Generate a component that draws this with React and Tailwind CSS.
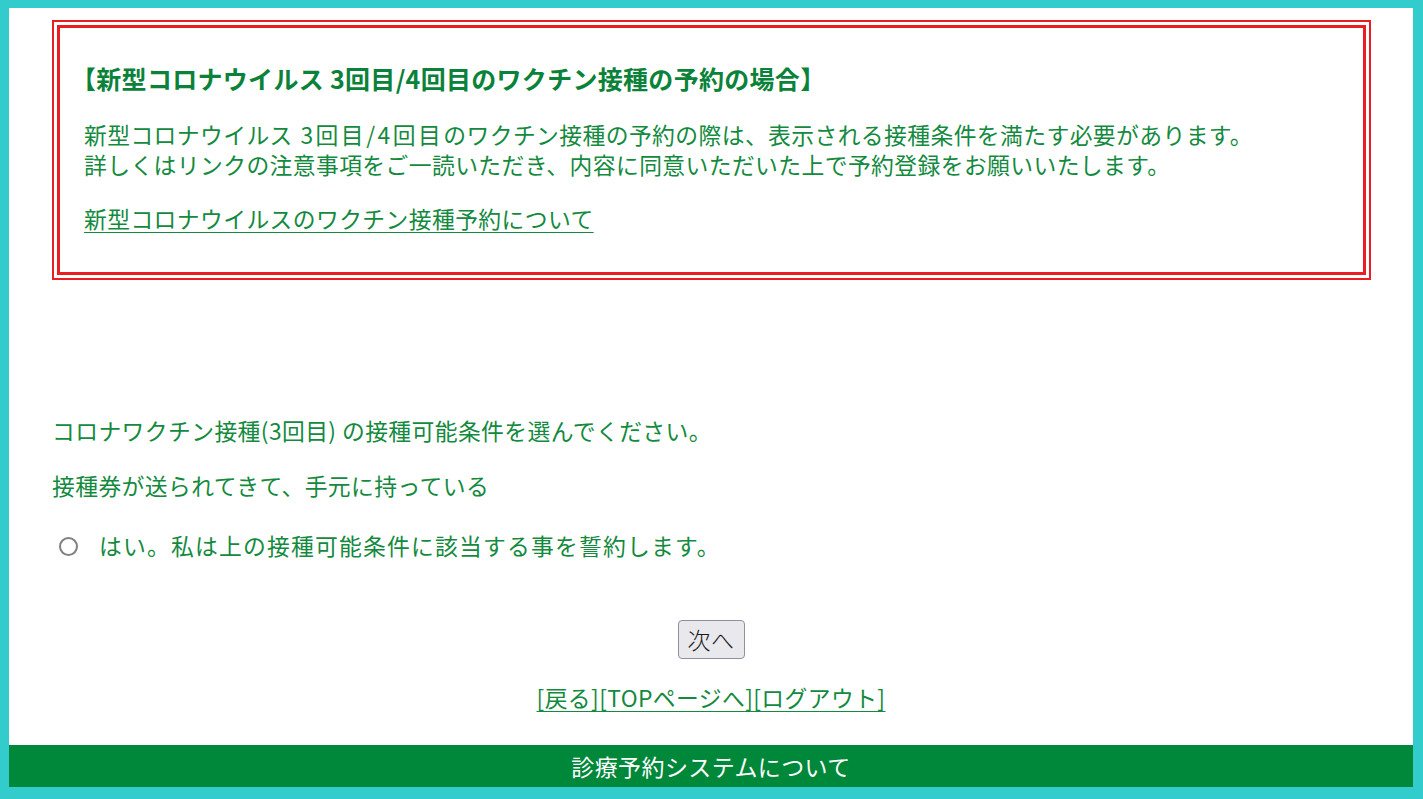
export default function App() {
  const font = { fontFamily: '"Noto Sans CJK JP", "Noto Sans", sans-serif' };
  return (
    <div className="min-h-screen bg-[#33cccc] pt-[8px] pl-[9px] pr-[10px] pb-[12px]" style={font}>
      <div className="bg-white flex flex-col text-[#138a3e] tracking-[0.4px]">
        <div className="mt-[12px] mx-[43px] mr-[42px] border-2 border-[#ea1d22] p-[3px]">
          <div className="border-[3px] border-[#ea1d22] pl-[24px] pr-6 pt-[34px] pb-[38px]">
            <h2 className="text-[25px] leading-[32px] font-bold text-[#0b8239] -ml-[13px] tracking-[0.3px]">
              【新型コロナウイルス 3回目/4回目のワクチン接種の予約の場合】
            </h2>
            <p className="mt-[26px] text-[22.8px] leading-[30px]">
              新型コロナウイルス<span className="tracking-[2.5px]"> 3回目/4回目</span>のワクチン接種の予約の際は、表示される接種条件を満たす必要があります。
              <br />
              詳しくはリンクの注意事項をご一読いただき、内容に同意いただいた上で予約登録をお願いいたします。
            </p>
            <p className="mt-[24px] text-[22.8px] leading-[30px]">
              <a href="#" className="underline underline-offset-4 decoration-1">
                新型コロナウイルスのワクチン接種予約について
              </a>
            </p>
          </div>
        </div>

        <div className="px-[43px] text-[22.8px] leading-[30px]">
          <p className="mt-[136px]">コロナワクチン接種(3回目) の接種可能条件を選んでください。</p>
          <p className="mt-[25px]">接種券が送られてきて、手元に持っている</p>
          <label className="mt-[30px] flex items-center">
            <span className="ml-[7px] w-[19px] h-[19px] rounded-full border-2 border-[#808080] bg-white" />
            <span className="ml-[21px] tracking-[1.2px]">はい。私は上の接種可能条件に該当する事を誓約します。</span>
          </label>
        </div>

        <div className="mt-[59px] flex justify-center">
          <button className="h-[39px] w-[67px] rounded-[4px] border border-[#8f8f9d] bg-[#e9e9ed] text-[23px] leading-none text-[#1a1a1a] font-light">
            次へ
          </button>
        </div>

        <div className="mt-[24px] flex justify-center text-[22.8px] leading-[30px]">
          <span className="underline underline-offset-4 decoration-1">
            [戻る][TOPページへ][ログアウト]
          </span>
        </div>

        <div className="mt-[32px] h-[42px] bg-[#00883a] flex items-center justify-center text-white text-[23px]">
          診療予約システムについて
        </div>
      </div>
    </div>
  );
}
